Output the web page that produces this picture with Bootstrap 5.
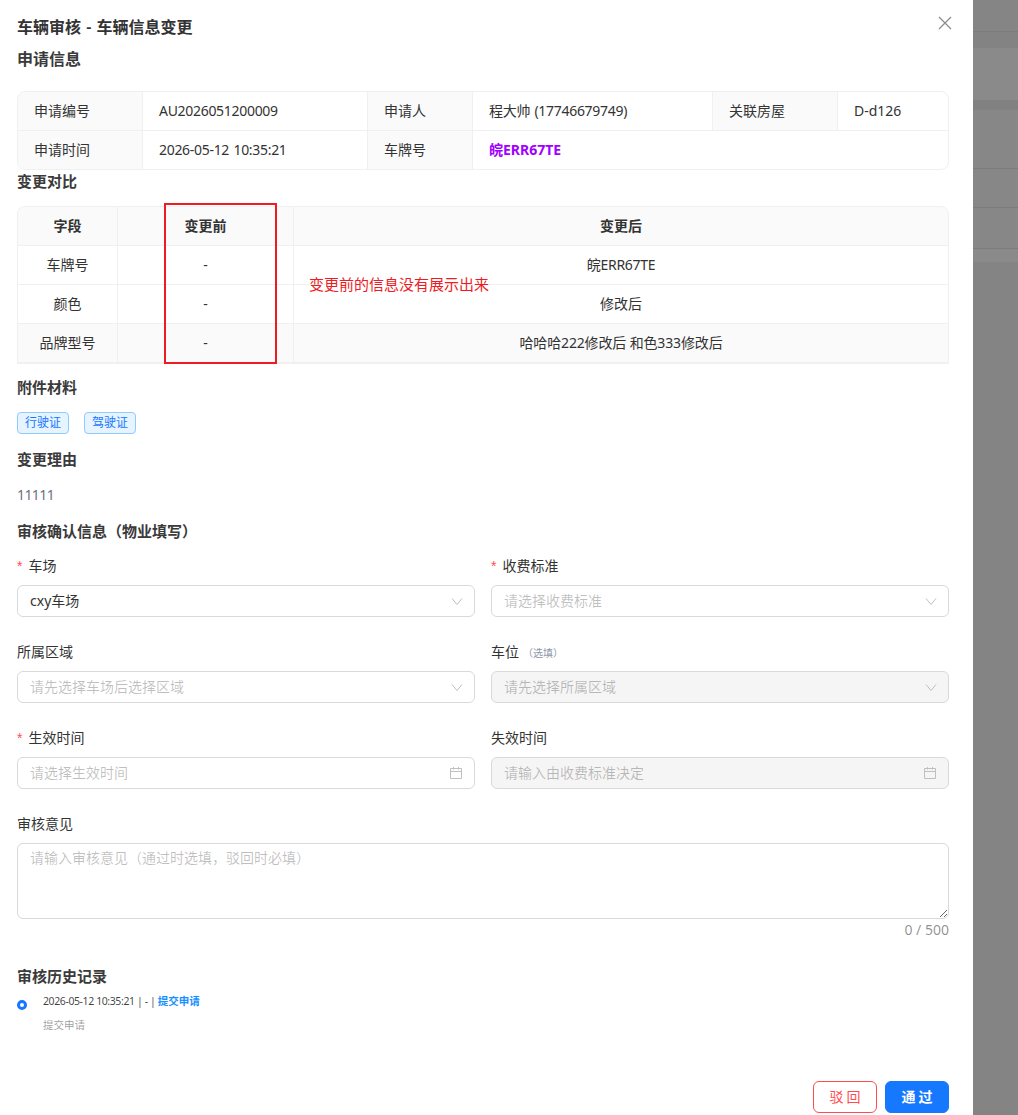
<!DOCTYPE html>
<html lang="zh-CN">
<head>
  <meta charset="UTF-8">
  <meta name="viewport" content="width=device-width, initial-scale=1.0">
  <title>车辆审核</title>
  <link href="https://cdn.jsdelivr.net/npm/bootstrap@5.3.3/dist/css/bootstrap.min.css" rel="stylesheet">
  <style>
    body { font-family: "Noto Sans", "Noto Sans CJK SC", sans-serif; font-size: 14px; color: #333; background: #858585; overflow: hidden; }
    .page-wrap { height: 1115px; }
    .drawer-panel { width: 973px; height: 1115px; background: #fff; padding: 0 24px 0 17px; flex: none; position: relative; }
    .backdrop-side { flex: 1; background: #848484; }
    .band-a { height: 32px; background: #858585; border-bottom: 1px solid #7c7c7c; }
    .band-b { height: 16px; background: #838383; }
    .band-c { height: 52px; background: #8a8a8a; }
    .band-d { height: 10px; background: #818181; }
    .band-e { height: 59px; background: #878787; border-bottom: 1px solid #7c7c7c; }
    .band-f { height: 39px; background: #878787; border-bottom: 1px solid #7c7c7c; }
    .band-g { height: 41px; background: #878787; border-bottom: 1px solid #7c7c7c; }
    .band-h { height: 13px; background: #8a8a8a; }
    .drawer-title { font-size: 16px; font-weight: 600; line-height: 24px; padding-top: 15px; margin: 0; color: #333; height: 39px; word-spacing: 1px; }
    .close-x { position: absolute; left: 937px; top: 15px; }
    .sec-head { font-size: 15px; font-weight: 600; line-height: 22px; margin: 0; color: #3a3a3a; }
    .head-apply { font-size: 16px; margin-top: 9px; margin-bottom: 21px; }
    .head-compare { margin-top: 0; margin-bottom: 14px; }
    .head-files { margin-top: 12px; margin-bottom: 14px; }
    .head-reason { margin-top: 14px; margin-bottom: 14px; }
    .head-audit { margin-top: 14px; margin-bottom: 13px; }
    .head-history { margin-top: 24px; margin-bottom: 6px; }
    .desc-grid { width: 932px; height: 79px; border: 1px solid #f0f0f0; border-radius: 8px; overflow: hidden; table-layout: fixed; border-collapse: separate; border-spacing: 0; margin: 0; }
    .desc-grid th, .desc-grid td { height: 39px; padding: 0 16px; border-right: 1px solid #f0f0f0; border-bottom: 1px solid #f0f0f0; font-weight: 400; vertical-align: middle; line-height: 20px; }
    .desc-grid th { background: #fafafa; }
    .desc-grid tr:last-child th, .desc-grid tr:last-child td { border-bottom: 0; height: 38px; }
    .desc-grid tr > :last-child { border-right: 0; }
    .num-val { letter-spacing: -.3px; word-spacing: 1px; }
    .mix-val { letter-spacing: -.15px; }
    .plate-text { color: #a000ff; font-weight: 700; }
    .cmp-wrap { position: relative; }
    .cmp-grid { width: 932px; table-layout: fixed; border-collapse: separate; border-spacing: 0; border: 1px solid #f0f0f0; border-bottom-width: 2px; border-radius: 8px 8px 0 0; overflow: hidden; margin: 0; }
    .cmp-grid th, .cmp-grid td { height: 39px; padding: 0 16px; text-align: center; vertical-align: middle; border-right: 1px solid #f0f0f0; border-bottom: 1px solid #f0f0f0; line-height: 20px; }
    .cmp-grid tr:last-child td { border-bottom: 0; height: 38px; }
    .cmp-grid tr > :last-child { border-right: 0; }
    .cmp-grid th { background: #fafafa; font-weight: 600; }
    .cmp-grid .row-shade td { background: #fafafa; }
    .red-frame { position: absolute; left: 147px; top: -3px; width: 113px; height: 161px; border: 2px solid #ed1c24; pointer-events: none; }
    .red-note { position: absolute; left: 292px; top: 67px; font-size: 15px; line-height: 22px; color: #ed1c24; white-space: nowrap; }
    .tag-line { gap: 15px; }
    .file-tag { display: inline-block; height: 22px; line-height: 20px; padding: 0 7px; font-size: 12px; color: #1677ff; background: #e6f4ff; border: 1px solid #91caff; border-radius: 4px; }
    .muted-val { color: #6b7280; line-height: 22px; letter-spacing: -.6px; }
    .fld-row { --bs-gutter-x: 16px; --bs-gutter-y: 0; width: 948px; }
    .fld-label { height: 22px; line-height: 22px; margin-bottom: 8px; display: block; }
    .req-star { color: #ff4d4f; font-family: "Liberation Sans", sans-serif; margin-right: 6px; }
    .opt-hint { font-size: 10px; color: #8c96a8; margin-left: 4px; }
    .fld-box { height: 32px; border: 1px solid #d9d9d9; border-radius: 6px; padding: 0 11px 0 12px; background: #fff; margin-bottom: 24px; }
    .fld-box.is-off { background: #f5f5f5; }
    .fld-box input { border: 0; outline: 0; background: transparent; padding: 0 0 2px; font: inherit; color: #333; flex: 1; min-width: 0; }
    .fld-box input::placeholder { color: rgba(0,0,0,.25); opacity: 1; }
    .note-area { display: block; width: 932px; height: 76px; border: 1px solid #d9d9d9; border-radius: 6px; padding: 3px 12px 5px; font: inherit; line-height: 22px; outline: 0; }
    .note-area::placeholder { color: rgba(0,0,0,.25); opacity: 1; }
    .count-text { width: 932px; text-align: right; color: rgba(0,0,0,.45); line-height: 22px; }
    .hist-dot { width: 10px; height: 10px; border: 3px solid #1677ff; border-radius: 50%; background: #fff; flex: none; margin-top: 7px; }
    .hist-meta { font-size: 10.5px; line-height: 16px; letter-spacing: -.4px; color: rgba(0,0,0,.75); }
    .hist-meta b { color: #1890ff; font-weight: 600; letter-spacing: 0; }
    .hist-sub { font-size: 10.5px; line-height: 16px; color: rgba(0,0,0,.4); margin-top: 8px; }
    .act-bar { position: absolute; left: 813px; top: 1081px; }
    .act-btn { width: 64px; height: 32px; padding: 0 0 0 3px; border-radius: 6px; font-size: 14px; letter-spacing: 3px; line-height: 30px; }
    .act-reject { color: #ff4d4f; border: 1px solid #ff4d4f; background: #fff; }
    .act-pass { color: #fff; background: #1677ff; border: 1px solid #1677ff; font-weight: 600; }
  </style>
</head>
<body>
  <div class="page-wrap d-flex">
    <div class="drawer-panel">
      <h5 class="drawer-title">车辆审核 - 车辆信息变更</h5>
      <svg class="close-x" width="16" height="16" viewBox="0 0 16 16" fill="none" stroke="#8c8c8c" stroke-width="1.3"><path d="M2 2l12 12M14 2L2 14"/></svg>

      <h6 class="sec-head head-apply">申请信息</h6>
      <table class="desc-grid">
        <colgroup><col style="width:125px"><col style="width:225px"><col style="width:105px"><col style="width:240px"><col style="width:125px"><col></colgroup>
        <tr><th>申请编号</th><td class="num-val">AU2026051200009</td><th>申请人</th><td class="num-val">程大帅 (17746679749)</td><th>关联房屋</th><td>D-d126</td></tr>
        <tr><th>申请时间</th><td class="num-val">2026-05-12 10:35:21</td><th>车牌号</th><td colspan="3"><span class="plate-text">皖ERR67TE</span></td></tr>
      </table>

      <h6 class="sec-head head-compare">变更对比</h6>
      <div class="cmp-wrap">
        <table class="cmp-grid">
          <colgroup><col style="width:100px"><col style="width:176px"><col></colgroup>
          <tr><th>字段</th><th>变更前</th><th>变更后</th></tr>
          <tr><td>车牌号</td><td>-</td><td class="num-val">皖ERR67TE</td></tr>
          <tr><td>颜色</td><td>-</td><td>修改后</td></tr>
          <tr class="row-shade"><td>品牌型号</td><td>-</td><td class="mix-val">哈哈哈222修改后 和色333修改后</td></tr>
        </table>
        <div class="red-frame"></div>
        <div class="red-note">变更前的信息没有展示出来</div>
      </div>

      <h6 class="sec-head head-files">附件材料</h6>
      <div class="d-flex tag-line"><span class="file-tag">行驶证</span><span class="file-tag">驾驶证</span></div>

      <h6 class="sec-head head-reason">变更理由</h6>
      <div class="muted-val">11111</div>

      <h6 class="sec-head head-audit">审核确认信息（物业填写）</h6>
      <div class="row fld-row">
        <div class="col-6">
          <label class="fld-label"><span class="req-star">*</span>车场</label>
          <div class="fld-box d-flex align-items-center"><input value="cxy车场"><svg width="12" height="12" viewBox="0 0 12 12" fill="none" stroke="#bfbfbf"><path d="M1 3.5l5 6 5-6"/></svg></div>
        </div>
        <div class="col-6">
          <label class="fld-label"><span class="req-star">*</span>收费标准</label>
          <div class="fld-box d-flex align-items-center"><input placeholder="请选择收费标准"><svg width="12" height="12" viewBox="0 0 12 12" fill="none" stroke="#bfbfbf"><path d="M1 3.5l5 6 5-6"/></svg></div>
        </div>
        <div class="col-6">
          <label class="fld-label">所属区域</label>
          <div class="fld-box d-flex align-items-center"><input placeholder="请先选择车场后选择区域"><svg width="12" height="12" viewBox="0 0 12 12" fill="none" stroke="#bfbfbf"><path d="M1 3.5l5 6 5-6"/></svg></div>
        </div>
        <div class="col-6">
          <label class="fld-label">车位<span class="opt-hint">（选填）</span></label>
          <div class="fld-box is-off d-flex align-items-center"><input placeholder="请先选择所属区域" disabled><svg width="12" height="12" viewBox="0 0 12 12" fill="none" stroke="#bfbfbf"><path d="M1 3.5l5 6 5-6"/></svg></div>
        </div>
        <div class="col-6">
          <label class="fld-label"><span class="req-star">*</span>生效时间</label>
          <div class="fld-box d-flex align-items-center"><input placeholder="请选择生效时间"><svg width="14" height="14" viewBox="0 0 14 14" fill="none" stroke="#bfbfbf"><path d="M1.5 2.5h11v10h-11zM1.5 5.5h11M4.5 1v2.5M9.5 1v2.5"/></svg></div>
        </div>
        <div class="col-6">
          <label class="fld-label">失效时间</label>
          <div class="fld-box is-off d-flex align-items-center"><input placeholder="请输入由收费标准决定" disabled><svg width="14" height="14" viewBox="0 0 14 14" fill="none" stroke="#bfbfbf"><path d="M1.5 2.5h11v10h-11zM1.5 5.5h11M4.5 1v2.5M9.5 1v2.5"/></svg></div>
        </div>
      </div>

      <label class="fld-label">审核意见</label>
      <textarea class="note-area" placeholder="请输入审核意见（通过时选填，驳回时必填）"></textarea>
      <div class="count-text">0 / 500</div>

      <h6 class="sec-head head-history">审核历史记录</h6>
      <div class="d-flex gap-3">
        <div class="hist-dot"></div>
        <div>
          <div class="hist-meta">2026-05-12 10:35:21 | - | <b>提交申请</b></div>
          <div class="hist-sub">提交申请</div>
        </div>
      </div>

      <div class="act-bar d-flex gap-2">
        <button class="btn act-btn act-reject" type="button">驳回</button>
        <button class="btn act-btn act-pass" type="button">通过</button>
      </div>
    </div>
    <div class="backdrop-side">
      <div class="band-a"></div>
      <div class="band-b"></div>
      <div class="band-c"></div>
      <div class="band-d"></div>
      <div class="band-e"></div>
      <div class="band-f"></div>
      <div class="band-g"></div>
      <div class="band-h"></div>
    </div>
  </div>
  <script src="https://cdn.jsdelivr.net/npm/bootstrap@5.3.3/dist/js/bootstrap.bundle.min.js"></script>
</body>
</html>
